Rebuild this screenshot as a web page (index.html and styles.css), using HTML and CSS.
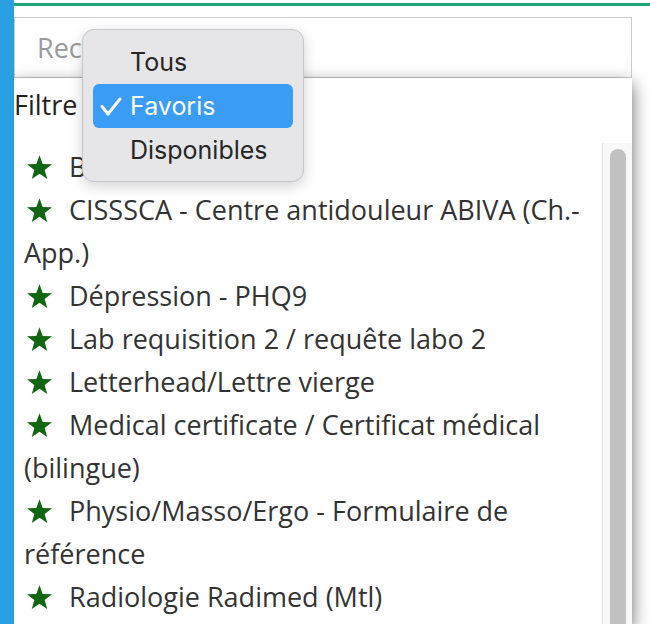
FILE: index.html
```html
<!DOCTYPE html>
<html lang="fr">
<head>
<meta charset="utf-8">
<title>Formulaires</title>
<link rel="stylesheet" href="styles.css">
</head>
<body>
<div class="app">
  <div class="sidebar"></div>
  <div class="main">
    <div class="topline"></div>
    <div class="search"><span class="placeholder">Rechercher...</span></div>
    <div class="panel">
      <div class="filter-row"><span class="filter-label">Filtre</span><span class="select">Favoris</span></div>
      <div class="list-wrap">
        <ul class="list">
          <li><svg class="star" viewBox="0 0 24 24"><polygon points="12,0.2 15.06,8.59 23.98,8.91 16.95,14.41 19.41,22.99 12,18 4.59,22.99 7.05,14.41 0.02,8.91 8.94,8.59"/></svg>Bilan de santé</li>
          <li><svg class="star" viewBox="0 0 24 24"><polygon points="12,0.2 15.06,8.59 23.98,8.91 16.95,14.41 19.41,22.99 12,18 4.59,22.99 7.05,14.41 0.02,8.91 8.94,8.59"/></svg>CISSSCA - Centre antidouleur ABIVA (Ch.-App.)</li>
          <li><svg class="star" viewBox="0 0 24 24"><polygon points="12,0.2 15.06,8.59 23.98,8.91 16.95,14.41 19.41,22.99 12,18 4.59,22.99 7.05,14.41 0.02,8.91 8.94,8.59"/></svg>Dépression - PHQ9</li>
          <li><svg class="star" viewBox="0 0 24 24"><polygon points="12,0.2 15.06,8.59 23.98,8.91 16.95,14.41 19.41,22.99 12,18 4.59,22.99 7.05,14.41 0.02,8.91 8.94,8.59"/></svg>Lab requisition 2 / requête labo 2</li>
          <li><svg class="star" viewBox="0 0 24 24"><polygon points="12,0.2 15.06,8.59 23.98,8.91 16.95,14.41 19.41,22.99 12,18 4.59,22.99 7.05,14.41 0.02,8.91 8.94,8.59"/></svg>Letterhead/Lettre vierge</li>
          <li><svg class="star" viewBox="0 0 24 24"><polygon points="12,0.2 15.06,8.59 23.98,8.91 16.95,14.41 19.41,22.99 12,18 4.59,22.99 7.05,14.41 0.02,8.91 8.94,8.59"/></svg>Medical certificate / Certificat médical (bilingue)</li>
          <li><svg class="star" viewBox="0 0 24 24"><polygon points="12,0.2 15.06,8.59 23.98,8.91 16.95,14.41 19.41,22.99 12,18 4.59,22.99 7.05,14.41 0.02,8.91 8.94,8.59"/></svg>Physio/Masso/Ergo - Formulaire de référence</li>
          <li><svg class="star" viewBox="0 0 24 24"><polygon points="12,0.2 15.06,8.59 23.98,8.91 16.95,14.41 19.41,22.99 12,18 4.59,22.99 7.05,14.41 0.02,8.91 8.94,8.59"/></svg>Radiologie Radimed (Mtl)</li>
        </ul>
        <div class="scrollbar"><div class="thumb"></div></div>
      </div>
    </div>
  </div>
  <div class="menu">
    <div class="menu-item">Tous</div>
    <div class="menu-item selected"><svg class="check" viewBox="0 0 22 20"><polyline points="2,9.5 8,17 20,2"/></svg>Favoris</div>
    <div class="menu-item">Disponibles</div>
  </div>
</div>
</body>
</html>
```
FILE: styles.css
```css
html, body {
  margin: 0;
  padding: 0;
  background: #ffffff;
}

.app {
  position: relative;
  display: flex;
  width: 650px;
  height: 624px;
  overflow: hidden;
  font-family: "Open Sans", "Noto Sans", sans-serif;
  color: #333333;
}

.sidebar {
  position: relative;
  z-index: 2;
  flex: 0 0 14px;
  background: #28a0e2;
}

.main {
  flex: 1;
  display: flex;
  flex-direction: column;
  padding-top: 3px;
  min-width: 0;
}

.topline {
  height: 3px;
  background: #1fa67a;
  flex: 0 0 auto;
}

.search {
  margin-top: 11px;
  width: 618px;
  height: 61px;
  box-sizing: border-box;
  border: 1px solid #cccccc;
  display: flex;
  align-items: center;
  padding-left: 22px;
  flex: 0 0 auto;
}

.placeholder {
  font-size: 27px;
  color: #9a9a9a;
}

.panel {
  width: 618px;
  flex: 1;
  background: #ffffff;
  box-shadow: 0 6px 16px rgba(0, 0, 0, 0.6);
  display: flex;
  flex-direction: column;
  min-height: 0;
}

.filter-row {
  padding: 5px 0 17px 0;
  font-size: 27px;
  line-height: 43px;
  color: #222222;
  display: flex;
  gap: 20px;
}

.select {
  color: #222222;
}

.list-wrap {
  flex: 1;
  display: flex;
  min-height: 0;
}

.list {
  flex: 1;
  list-style: none;
  margin: 0;
  padding: 2px 8px 0 10px;
  font-size: 27px;
  line-height: 43px;
  color: #333333;
}

.star {
  width: 25px;
  height: 25px;
  margin-left: 3px;
  margin-right: 17px;
  vertical-align: -3px;
  fill: #116611;
}

.scrollbar {
  flex: 0 0 30px;
  box-sizing: border-box;
  background: #f8f8f8;
  border-left: 1px solid #e6e6e6;
  padding: 6px 6px 0 7px;
}

.thumb {
  height: 100%;
  background: #c1c1c1;
  border-radius: 8px 8px 0 0;
}

.menu {
  position: absolute;
  z-index: 5;
  left: 82px;
  top: 29px;
  width: 222px;
  height: 153px;
  box-sizing: border-box;
  padding: 10px 10px 9px 10px;
  background: #e6e6e9;
  border: 1px solid #c6c6c8;
  border-radius: 12px;
  box-shadow: 0 4px 14px rgba(0, 0, 0, 0.18);
  font-family: Inter, "Liberation Sans", sans-serif;
  font-size: 25px;
  color: #262626;
}

.menu-item {
  height: 44px;
  display: flex;
  align-items: center;
  padding-left: 37px;
  border-radius: 6px;
  position: relative;
}

.menu-item.selected {
  background: #3b9cf6;
  color: #ffffff;
}

.check {
  position: absolute;
  left: 7px;
  top: 13px;
  width: 22px;
  height: 20px;
  fill: none;
  stroke: #ffffff;
  stroke-width: 3;
  stroke-linecap: round;
  stroke-linejoin: round;
}
```
